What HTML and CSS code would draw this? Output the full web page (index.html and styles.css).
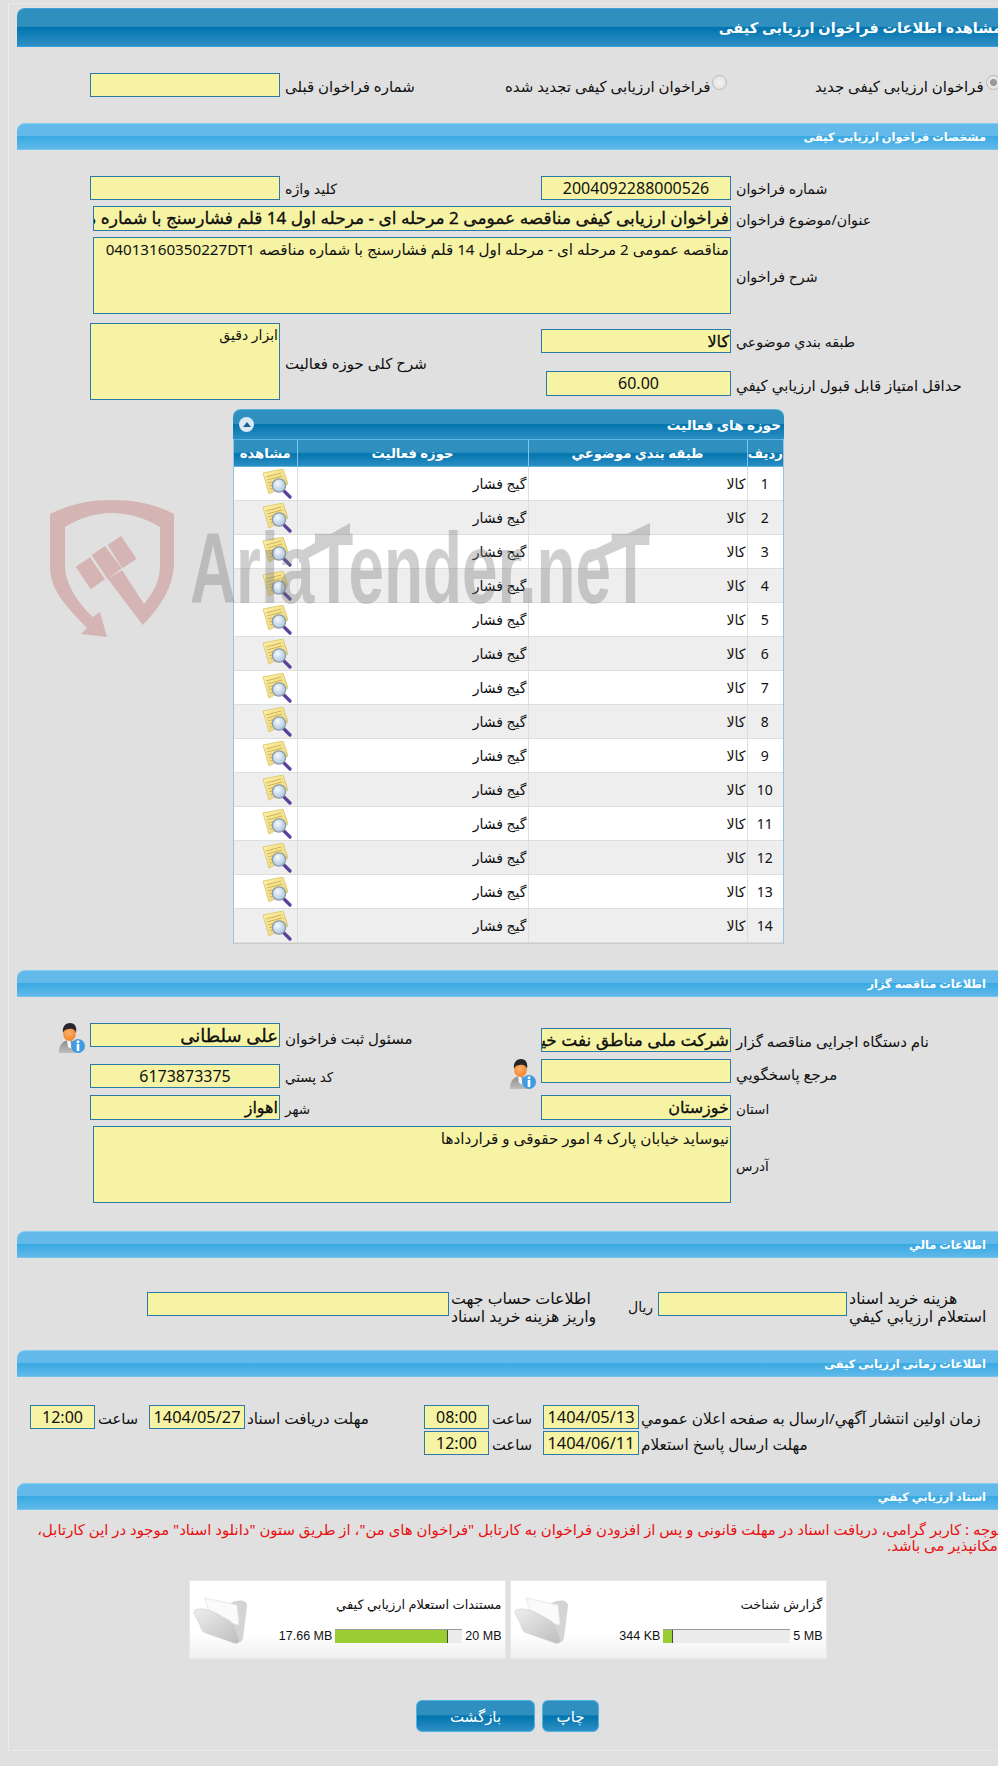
FILE: index.html
```html
<!DOCTYPE html>
<html lang="fa">
<head>
<meta charset="utf-8">
<title>مشاهده اطلاعات فراخوان ارزیابی کیفی</title>
<link rel="stylesheet" href="styles.css">
</head>
<body>
<svg class="defs" width="0" height="0" aria-hidden="true">
  <defs>
    <linearGradient id="sheet" x1="0" y1="0" x2="1" y2="1"><stop offset="0" stop-color="#fdf3a8"/><stop offset="1" stop-color="#e8cf72"/></linearGradient>
    <radialGradient id="glass" cx=".4" cy=".35" r=".8"><stop offset="0" stop-color="#f4fbff"/><stop offset="1" stop-color="#9db8d2"/></radialGradient>
    <linearGradient id="suit" x1="0" y1="0" x2="0" y2="1"><stop offset="0" stop-color="#8d8d8d"/><stop offset="1" stop-color="#bdbdbd"/></linearGradient>
    <radialGradient id="face" cx=".45" cy=".4" r=".7"><stop offset="0" stop-color="#ffb169"/><stop offset="1" stop-color="#f07f22"/></radialGradient>
    <linearGradient id="flap" x1="0" y1="0" x2="1" y2="1"><stop offset="0" stop-color="#eeeeee"/><stop offset="1" stop-color="#bdbdbd"/></linearGradient>
    <symbol id="ico-view" viewBox="0 0 30 30">
      <path d="M1 4 21 0 26 15 7 25Z" fill="url(#sheet)" stroke="#d8c36c" stroke-width=".8"/>
      <path d="M4 8 19 4M5 11 20 7M6 14 13 12M7 17 12 15M8 20 13 18" stroke="#d2b558" stroke-width="1.1" fill="none"/>
      <path d="M21 21 28 28" stroke="#5b3f98" stroke-width="3.2" stroke-linecap="round"/>
      <circle cx="17" cy="16.5" r="6.6" fill="url(#glass)" stroke="#8b9bb0" stroke-width="1.3"/>
    </symbol>
    <symbol id="ico-person" viewBox="0 0 30 30">
      <path d="M3 30C3 22 6 18 13 17 20 18 24 22 24 30Z" fill="url(#suit)"/>
      <path d="M11 17 14 17 16 26 12 24Z" fill="#f3f6fa"/>
      <ellipse cx="13.5" cy="11" rx="6.3" ry="7" fill="url(#face)"/>
      <path d="M7 10C6 3 10 0 14 0 19 0 21 4 20 10 19 6 16 5.500 13 6 10 6 8 7 7 10Z" fill="#27272b"/>
      <circle cx="22" cy="23" r="7" fill="#3f9be4"/>
      <circle cx="22" cy="18.800" r="1.500" fill="#fff"/>
      <rect x="20.700" y="21" width="2.600" height="7" fill="#fff"/>
    </symbol>
    <symbol id="ico-folder" viewBox="0 0 56 48">
      <path d="M38 6C46 2 54 3 54 9L50 41C49 46 45 46 42 44L30 12Z" fill="#d4d4d4"/>
      <path d="M12 1 44 8 46 28 18 22Z" fill="#fafafa" stroke="#e3e3e3" stroke-width=".8"/>
      <path d="M2 13C10 10 20 14 28 19 35 23 38 24 40 27L46 42C47 46 44 47 41 46L13 36C9 35 8 32 7 28L1 16C1 15 1 14 2 13Z" fill="url(#flap)" stroke="#cccccc" stroke-width=".6"/>
    </symbol>
  </defs>
</svg>

<div class="frame" dir="rtl">
  <svg class="watermark" viewBox="0 0 600 140" width="600" height="140" aria-hidden="true">
    <g fill="#be5050" opacity=".3">
      <path d="M0 14C20 4 40 0 62 0 85 0 105 4 124 14V66C122 88 112 105 92.700 125L58 79 72 70 94 104C104 92 110 80 110 66V27C95 18 78 13 62 13 45 13 30 18 15 27V66C15 85 30 105 43 117L50 112 57 137 31 134 37 128C15 105 0 90 0 66Z"/>
      <path d="M25.700 66.700 40 57.300 55 79.300 40.700 89.300Z"/>
      <path d="M41.700 55 55 46 71.700 68.300 57.700 79.300Z"/>
      <path d="M57.700 45 71 36 86.700 59 72.300 68.300Z"/>
    </g>
    <g fill="#787878" opacity=".35">
      <text class="wm-text" x="140" y="103" textLength="460" lengthAdjust="spacingAndGlyphs" direction="ltr">AriaTender.neT</text>
      <path d="M249 52 300 23V36L249 63Z"/>
      <path d="M539 52 600 23V36L539 63Z"/>
    </g>
  </svg>

  <h1 class="title-bar">مشاهده اطلاعات فراخوان ارزیابی کیفی</h1>

  <div class="row row-radio">
    <div class="cell cell-prev">
      <div class="field"></div>
      <span class="label">شماره فراخوان قبلی</span>
    </div>
    <div class="cell cell-opt">
      <span class="label label-opt">فراخوان ارزیابی کیفی تجدید شده</span>
      <span class="radio"></span>
    </div>
    <div class="cell">
      <span class="label label-opt">فراخوان ارزیابی کیفی جدید</span>
      <span class="radio radio-on"></span>
    </div>
  </div>

  <h2 class="section-bar">مشخصات فراخوان ارزیابی کیفی</h2>

  <div class="section-body section-spec">
    <div class="row">
      <div class="cell cell-left">
        <div class="field"></div>
        <span class="label label-sm">کلید واژه</span>
      </div>
      <div class="cell">
        <div class="field field-num">2004092288000526</div>
        <span class="label label-sm">شماره فراخوان</span>
      </div>
    </div>
    <div class="row row-wide row-subject">
      <div class="field field-wide field-strong field-xl">فراخوان ارزیابی کیفی مناقصه عمومی 2 مرحله ای - مرحله اول 14 قلم فشارسنج با شماره مناقصه 04013160350227DT1</div>
      <span class="label label-sm">عنوان/موضوع فراخوان</span>
    </div>
    <div class="row row-wide row-desc">
      <div class="field field-wide area area-tall">مناقصه عمومی 2 مرحله ای - مرحله اول 14 قلم فشارسنج با شماره مناقصه 04013160350227DT1</div>
      <span class="label label-sm">شرح فراخوان</span>
    </div>
    <div class="row row-class">
      <div class="cell cell-left">
        <div class="field area area-square">ابزار دقيق</div>
        <span class="label">شرح کلی حوزه فعالیت</span>
      </div>
      <div class="stack">
        <div class="cell">
          <div class="field field-strong">کالا</div>
          <span class="label label-sm">طبقه بندي موضوعي</span>
        </div>
        <div class="cell cell-score">
          <div class="field field-num field-score">60.00</div>
          <span class="label">حداقل امتیاز قابل قبول ارزیابي کیفي</span>
        </div>
      </div>
    </div>

    <div class="panel">
      <div class="panel-head">
        <span class="panel-title">حوزه های فعالیت</span>
        <span class="collapse"><span class="caret"></span></span>
      </div>
      <table class="grid">
        <thead>
          <tr><th class="c-no">رديف</th><th class="c-class">طبقه بندي موضوعي</th><th class="c-area">حوزه فعالیت</th><th class="c-view">مشاهده</th></tr>
        </thead>
        <tbody>
          <tr><td class="num">1</td><td>کالا</td><td>گیج فشار</td><td class="ico"><svg class="view-ico"><use href="#ico-view"/></svg></td></tr>
          <tr><td class="num">2</td><td>کالا</td><td>گیج فشار</td><td class="ico"><svg class="view-ico"><use href="#ico-view"/></svg></td></tr>
          <tr><td class="num">3</td><td>کالا</td><td>گیج فشار</td><td class="ico"><svg class="view-ico"><use href="#ico-view"/></svg></td></tr>
          <tr><td class="num">4</td><td>کالا</td><td>گیج فشار</td><td class="ico"><svg class="view-ico"><use href="#ico-view"/></svg></td></tr>
          <tr><td class="num">5</td><td>کالا</td><td>گیج فشار</td><td class="ico"><svg class="view-ico"><use href="#ico-view"/></svg></td></tr>
          <tr><td class="num">6</td><td>کالا</td><td>گیج فشار</td><td class="ico"><svg class="view-ico"><use href="#ico-view"/></svg></td></tr>
          <tr><td class="num">7</td><td>کالا</td><td>گیج فشار</td><td class="ico"><svg class="view-ico"><use href="#ico-view"/></svg></td></tr>
          <tr><td class="num">8</td><td>کالا</td><td>گیج فشار</td><td class="ico"><svg class="view-ico"><use href="#ico-view"/></svg></td></tr>
          <tr><td class="num">9</td><td>کالا</td><td>گیج فشار</td><td class="ico"><svg class="view-ico"><use href="#ico-view"/></svg></td></tr>
          <tr><td class="num">10</td><td>کالا</td><td>گیج فشار</td><td class="ico"><svg class="view-ico"><use href="#ico-view"/></svg></td></tr>
          <tr><td class="num">11</td><td>کالا</td><td>گیج فشار</td><td class="ico"><svg class="view-ico"><use href="#ico-view"/></svg></td></tr>
          <tr><td class="num">12</td><td>کالا</td><td>گیج فشار</td><td class="ico"><svg class="view-ico"><use href="#ico-view"/></svg></td></tr>
          <tr><td class="num">13</td><td>کالا</td><td>گیج فشار</td><td class="ico"><svg class="view-ico"><use href="#ico-view"/></svg></td></tr>
          <tr><td class="num">14</td><td>کالا</td><td>گیج فشار</td><td class="ico"><svg class="view-ico"><use href="#ico-view"/></svg></td></tr>
        </tbody>
      </table>
    </div>
  </div>

  <h2 class="section-bar">اطلاعات مناقصه گزار</h2>

  <div class="section-body section-owner">
    <div class="row row-owner-a">
      <div class="cell cell-left cell-top">
        <svg class="person"><use href="#ico-person"/></svg>
        <div class="field field-strong field-xxl">علی سلطانی</div>
        <span class="label label-low">مسئول ثبت فراخوان</span>
      </div>
      <div class="cell cell-push">
        <div class="field field-strong field-xl">شرکت ملی مناطق نفت خیز جنوب</div>
        <span class="label">نام دستگاه اجرایی مناقصه گزار</span>
      </div>
    </div>
    <div class="row row-owner-b">
      <div class="cell cell-left cell-push">
        <div class="field field-num">6173873375</div>
        <span class="label label-xs">کد پستي</span>
      </div>
      <div class="cell cell-top">
        <svg class="person"><use href="#ico-person"/></svg>
        <div class="field"></div>
        <span class="label label-low">مرجع پاسخگویي</span>
      </div>
    </div>
    <div class="row row-owner-c">
      <div class="cell cell-left">
        <div class="field field-strong">اهواز</div>
        <span class="label label-xs">شهر</span>
      </div>
      <div class="cell">
        <div class="field field-strong">خوزستان</div>
        <span class="label label-xs">استان</span>
      </div>
    </div>
    <div class="row row-wide row-address">
      <div class="field field-wide area area-tall">نیوساید خیابان پارک 4 امور حقوقی و قراردادها</div>
      <span class="label label-xs">آدرس</span>
    </div>
  </div>

  <h2 class="section-bar">اطلاعات مالي</h2>

  <div class="section-body section-fin">
    <div class="row row-fin">
      <div class="cell cell-account">
        <div class="field field-account"></div>
        <span class="label label-two">اطلاعات حساب جهت<br>واریز هزینه خرید اسناد</span>
      </div>
      <div class="cell">
        <span class="label label-rial">ریال</span>
        <div class="field field-fee"></div>
        <span class="label label-two">هزینه خرید اسناد<br>استعلام ارزیابي کیفي</span>
      </div>
    </div>
  </div>

  <h2 class="section-bar">اطلاعات زمانی ارزیابی کیفی</h2>

  <div class="section-body section-time">
    <div class="row row-time">
      <div class="date-group date-left">
        <div class="field field-time">12:00</div>
        <span class="label label-hour">ساعت</span>
        <div class="field field-date">1404/05/27</div>
        <span class="label label-date">مهلت دریافت اسناد</span>
      </div>
      <div class="stack stack-dates">
        <div class="date-group">
          <div class="field field-time">08:00</div>
          <span class="label label-hour">ساعت</span>
          <div class="field field-date">1404/05/13</div>
          <span class="label label-date">زمان اولین انتشار آگهي/ارسال به صفحه اعلان عمومي</span>
        </div>
        <div class="date-group">
          <div class="field field-time">12:00</div>
          <span class="label label-hour">ساعت</span>
          <div class="field field-date">1404/06/11</div>
          <span class="label label-date">مهلت ارسال پاسخ استعلام</span>
        </div>
      </div>
    </div>
  </div>

  <h2 class="section-bar">اسناد ارزيابي کيفي</h2>

  <p class="notice">توجه : کاربر گرامی، دریافت اسناد در مهلت قانونی و پس از افزودن فراخوان به کارتابل "فراخوان های من"، از طریق ستون "دانلود اسناد" موجود در این کارتابل،<br>امکانپذیر می باشد.</p>

  <div class="docs">
    <div class="doc">
      <div class="doc-main">
        <div class="doc-title">گزارش شناخت</div>
        <div class="doc-meter">
          <span>5 MB</span>
          <div class="bar"><div class="bar-fill bar-a"></div></div>
          <span>344 KB</span>
        </div>
      </div>
      <svg class="folder"><use href="#ico-folder"/></svg>
    </div>
    <div class="doc">
      <div class="doc-main">
        <div class="doc-title">مستندات استعلام ارزیابي کیفي</div>
        <div class="doc-meter">
          <span>20 MB</span>
          <div class="bar"><div class="bar-fill bar-b"></div></div>
          <span>17.66 MB</span>
        </div>
      </div>
      <svg class="folder"><use href="#ico-folder"/></svg>
    </div>
  </div>

  <div class="actions">
    <button class="btn btn-print" type="button">چاپ</button>
    <button class="btn btn-back" type="button">بازگشت</button>
  </div>
</div>
</body>
</html>
```
FILE: styles.css
```css
html, body { margin: 0; padding: 0; overflow: hidden; background: #e0e0e0; }
body { height: 1766px; }
.defs { position: absolute; }

.frame {
  position: relative;
  box-sizing: border-box;
  width: 994px;
  height: 1748px;
  margin: 3px 0 0 8px;
  padding: 4px 0 19px 8px;
  border-left: 1px solid #ececec;
  border-top: 1px solid #e8e8e8;
  border-bottom: 1px solid #e9e9e9;
  font: 15px/18px "Noto Sans", "DejaVu Sans", sans-serif;
  color: #111;
}

.watermark { position: absolute; left: 41px; top: 496px; z-index: 5; pointer-events: none; }
.wm-text { font: bold 100px "Liberation Sans", sans-serif; }

.title-bar {
  box-sizing: border-box;
  height: 39px;
  margin: 0;
  border-top: 1px solid #3d9edb;
  border-bottom: 1px solid #3b9de0;
  border-top-left-radius: 8px;
  background: linear-gradient(#2f90bf 0, #2f90bf 47%, #0274ae 49%, #2d8fc4 100%);
  color: #fff;
  font: bold 14.5px/37px "Noto Sans", "DejaVu Sans", sans-serif;
}

.section-bar {
  box-sizing: border-box;
  height: 27px;
  margin: 0;
  padding: 0 16px 0 0;
  border-top: 1px solid #83cdf2;
  border-bottom: 1px solid #74c3ee;
  border-top-left-radius: 8px;
  background: linear-gradient(#62b9ea 0, #62b9ea 46%, #3aaae2 50%, #60b8ea 100%);
  color: #fff;
  font: bold 11.4px/25px "Noto Sans", "DejaVu Sans", sans-serif;
}

.row { display: flex; direction: ltr; padding-left: 73px; }
.cell { display: flex; align-items: center; }
.cell-left { width: 451px; flex: none; }
.cell-top { align-items: flex-start; }
.cell-push { padding-top: 3px; }
.stack { display: flex; flex-direction: column; }

.field {
  box-sizing: border-box;
  flex: none;
  width: 190px;
  height: 24px;
  padding: 0 1px;
  overflow: hidden;
  border: 1px solid #2b7aa9;
  background: #f6f4a4;
  direction: rtl;
  white-space: nowrap;
  font-size: 15px;
  line-height: 22px;
}
.field-num { text-align: center; font-size: 16px; }
.field-strong { font-size: 16px; -webkit-text-stroke: .3px #000; }
.field-xl { font-size: 17px; }
.field-xxl { font-size: 18px; }
.field-wide { width: 638px; }
.area { white-space: normal; }
.area-tall { height: 77px; font-size: 15.2px; }
.area-square { height: 77px; font-size: 14px; }
.label { position: relative; top: 1px; padding-left: 5px; direction: rtl; white-space: nowrap; }
.label-sm { font-size: 14.2px; }
.label-xs { font-size: 13.5px; }
.label-opt { padding-left: 0; font-size: 15px; }
.label-low { margin-top: 5px; }
.label-two { top: -3px; padding-left: 2px; font-size: 15.8px; line-height: 18px; text-align: left; }
.label-rial { top: 6px; padding: 0 5px 0 0; font-size: 14px; }
.label-date { padding-left: 2px; font-size: 15.3px; }
.label-hour { box-sizing: border-box; width: 50px; padding-left: 3px; font-size: 14.7px; text-align: left; }

.row-radio { height: 24px; margin: 26px 0; }
.cell-prev { width: 415px; flex: none; }
.cell-opt { width: 310px; flex: none; }
.radio {
  box-sizing: border-box;
  flex: none;
  width: 15px;
  height: 15px;
  margin: -5px 0 0 2px;
  border: 1px solid #bbb;
  border-radius: 50%;
  background: radial-gradient(#f4f4f4, #dcdcdc);
}
.radio-on { background: radial-gradient(#9a9a9a 0, #9a9a9a 35%, #e8e8e8 42%, #dcdcdc 100%); }

.section-spec { padding: 26px 0 26px; }
.row-wide { padding-left: 76px; align-items: center; }
.row-subject { margin-top: 6px; }
.row-subject .field { height: 25px; }
.row-desc { margin-top: 6px; }
.row-class { margin-top: 9px; }
.row-class .stack { margin-top: 6px; }
.cell-score { margin-top: 18px; padding-left: 5px; }
.field-score { width: 185px; height: 25px; }

.panel {
  box-sizing: border-box;
  width: 551px;
  margin: 9px 218px 0 0;
  border: 1px solid #8fc6e6;
  border-top: 0;
  border-bottom: 1px solid #c9c9c9;
  border-radius: 8px 8px 0 0;
  background: #fff;
}
.panel-head {
  display: flex;
  align-items: center;
  justify-content: space-between;
  box-sizing: border-box;
  height: 30px;
  margin: 0 -1px;
  padding: 0 3px 0 6px;
  border-top: 1px solid #5aaed8;
  border-radius: 8px 8px 0 0;
  background: linear-gradient(#2f90bf 0, #2f90bf 47%, #0274ae 49%, #2d8fc4 100%);
  color: #fff;
  font-size: 13.5px;
  font-weight: bold;
}
.collapse { display: flex; align-items: center; justify-content: center; width: 15px; height: 15px; border-radius: 50%; background: #dce9f3; }
.caret { width: 0; height: 0; margin-top: -1px; border: 4px solid transparent; border-top: 0; border-bottom: 5px solid #1f5f8e; }

.grid { width: 549px; border-collapse: collapse; table-layout: fixed; font-size: 14px; }
.grid th {
  box-sizing: border-box;
  height: 27px;
  padding: 0;
  border-top: 1px solid #5db4e2;
  border-bottom: 1px solid #5db4e2;
  border-right: 1px solid #7cc7ee;
  background: linear-gradient(#2f90bf 0, #2f90bf 47%, #0274ae 49%, #2d8fc4 100%);
  color: #fff;
  font-size: 13.2px;
  font-weight: bold;
}
.grid th:first-child { border-right: 0; }
.c-no { width: 36px; }
.c-class { width: 219px; }
.c-area { width: 231px; }
.grid td {
  box-sizing: border-box;
  height: 34px;
  padding: 0 1px 0 0;
  border: 1px solid #dedede;
  border-top: 0;
  text-align: right;
}
.grid td:first-child { border-right: 0; }
.grid td:last-child { border-left: 0; }
.grid tbody tr:nth-child(even) td { background: #eeeeee; }
.grid .num { text-align: center; }
.grid .ico { padding: 0; text-align: left; line-height: 0; }
.view-ico { width: 30px; height: 30px; margin-left: 28px; }

.section-owner { box-sizing: content-box; height: 208px; padding-top: 26px; }
.person { flex: none; width: 30px; height: 30px; margin: 0 4px 0 -34px; }
.row-owner-a { height: 30px; }
.row-owner-b { height: 30px; margin-top: 6px; }
.row-owner-c { margin-top: 6px; }
.row-owner-c .field { height: 25px; }
.row-address { margin-top: 6px; }

.section-fin { box-sizing: border-box; height: 92px; padding-top: 34px; }
.row-fin { padding-left: 130px; }
.row-fin .cell { align-items: flex-start; }
.cell-account { width: 481px; flex: none; }
.field-account { width: 302px; }
.field-fee { width: 189px; }

.section-time { box-sizing: border-box; height: 106px; padding-top: 28px; }
.row-time { align-items: flex-start; padding-left: 13px; }
.date-left { width: 394px; flex: none; }
.date-group { display: flex; align-items: center; }
.stack-dates { gap: 2px; }
.field-time { width: 65px; text-align: center; font-size: 16px; }
.field-date { width: 96px; margin-left: 4px; text-align: center; font-size: 16.4px; }

.notice { height: 38px; margin: 11px 0 0; color: #e81010; font-size: 14.9px; line-height: 16px; white-space: nowrap; }

.docs { display: flex; justify-content: center; gap: 4px; margin-top: 21px; padding-right: 4px; }
.doc {
  display: flex;
  box-sizing: border-box;
  width: 317px;
  height: 79px;
  padding: 0 3px;
  border: 1px solid #e8e8e8;
  background: linear-gradient(#fff 0, #fff 70%, #efefef 100%);
}
.doc-main { flex: 1; min-width: 0; }
.doc-title { height: 32px; margin-top: 14px; font-size: 13px; }
.doc-meter { display: flex; align-items: center; gap: 3px; font: 12.5px/18px "Liberation Sans", sans-serif; }
.doc-meter span { direction: ltr; white-space: nowrap; }
.bar { flex: none; box-sizing: border-box; width: 127px; height: 14px; border-top: 1px solid #999; background: #ececec; direction: ltr; }
.bar-fill { box-sizing: border-box; height: 100%; border-right: 1px solid #444; background: #9acd32; }
.bar-a { width: 8%; }
.bar-b { width: 89%; }
.folder { flex: none; width: 56px; height: 48px; margin-top: 16px; }

.actions { display: flex; justify-content: center; gap: 7px; margin-top: 41px; padding-right: 4px; }
.btn {
  height: 32px;
  padding: 0;
  border: 1px solid #4fb4e4;
  border-radius: 6px;
  background: linear-gradient(#2f90bf 0, #2f90bf 47%, #0274ae 49%, #2d8fc4 100%);
  color: #fff;
  font: 15px "Noto Sans", "DejaVu Sans", sans-serif;
}
.btn-print { width: 57px; }
.btn-back { width: 119px; }
```
